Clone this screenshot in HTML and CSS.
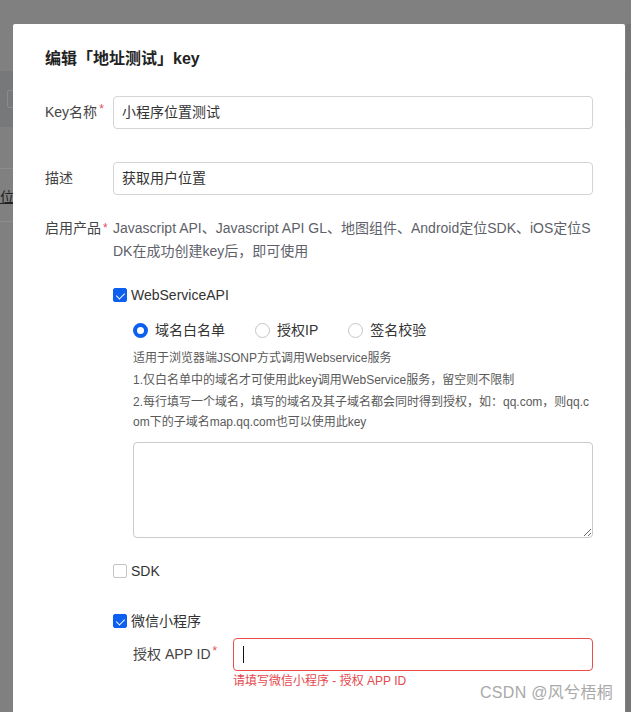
FILE: index.html
```html
<!DOCTYPE html>
<html lang="zh-CN">
<head>
<meta charset="utf-8">
<title>编辑key</title>
<link rel="stylesheet" href="styles.css">
</head>
<body>
<div class="page">
  <div class="page-band"><span class="page-box"></span></div>
  <div class="page-row"><span class="page-link">位</span></div>
  <div class="page-scroll"></div>
</div>

<div class="dialog">
  <h2 class="dialog-title">编辑「地址测试」key</h2>

  <div class="form-item">
    <div class="label">Key名称<span class="req">*</span></div>
    <div class="control"><div class="input">小程序位置测试</div></div>
  </div>

  <div class="form-item item-desc">
    <div class="label">描述</div>
    <div class="control"><div class="input">获取用户位置</div></div>
  </div>

  <div class="form-item item-products">
    <div class="label label-text">启用产品<span class="req">*</span></div>
    <div class="control">
      <p class="products-desc">Javascript API、Javascript API GL、地图组件、Android定位SDK、iOS定位SDK在成功创建key后，即可使用</p>

      <label class="checkbox row-ws"><span class="box checked"></span>WebServiceAPI</label>
      <div class="sub">
        <div class="radios">
          <span class="radio"><span class="dot on"></span>域名白名单</span>
          <span class="radio"><span class="dot"></span>授权IP</span>
          <span class="radio"><span class="dot"></span>签名校验</span>
        </div>
        <div class="help">
          <p>适用于浏览器端JSONP方式调用Webservice服务</p>
          <p>1.仅白名单中的域名才可使用此key调用WebService服务，留空则不限制</p>
          <p>2.每行填写一个域名，填写的域名及其子域名都会同时得到授权，如：qq.com，则qq.com下的子域名map.qq.com也可以使用此key</p>
        </div>
        <textarea class="textarea"></textarea>
      </div>

      <label class="checkbox row-sdk"><span class="box"></span>SDK</label>

      <label class="checkbox row-wx"><span class="box checked"></span>微信小程序</label>
      <div class="sub">
        <div class="appid-row">
          <div class="appid-label">授权 APP ID<span class="req">*</span></div>
          <div class="appid-control">
            <div class="input input-error"><span class="caret"></span></div>
            <div class="error-text">请填写微信小程序 - 授权 APP ID</div>
          </div>
        </div>
      </div>
    </div>
  </div>
</div>

<div class="watermark">CSDN @风兮梧桐</div>
</body>
</html>
```

FILE: styles.css
```css
* { box-sizing: border-box; }

html, body {
  margin: 0;
  padding: 0;
  width: 631px;
  height: 712px;
  overflow: hidden;
}

body {
  background: #808080;
  font-family: "Liberation Sans", "Noto Sans CJK SC", sans-serif;
  font-size: 14px;
  color: #333;
  position: relative;
}

/* underlying page seen through the mask */
.page {
  position: absolute;
  inset: 0;
}
.page-band {
  position: absolute;
  left: 0;
  top: 71px;
  width: 631px;
  height: 56px;
  background: #777879;
}
.page-box {
  position: absolute;
  left: 7px;
  top: 19px;
  width: 40px;
  height: 18px;
  border: 1px solid #8a8a8a;
  border-radius: 2px;
}
.page-row {
  position: absolute;
  left: 0;
  top: 168px;
  width: 631px;
  height: 54px;
  border-top: 1px solid #8c8c8c;
  border-bottom: 1px solid #8c8c8c;
}
.page-link {
  position: absolute;
  left: 0;
  top: 17px;
  font-size: 14px;
  color: #222;
  text-decoration: underline;
  font-family: "Noto Sans CJK SC", sans-serif;
}
.page-scroll {
  position: absolute;
  right: 0;
  top: 24px;
  width: 5px;
  bottom: 0;
  background: #767676;
}

/* dialog */
.dialog {
  position: absolute;
  left: 13px;
  top: 24px;
  width: 612px;
  height: 720px;
  background: #fff;
  padding: 23px 32px 0 32px;
  border-radius: 2px 2px 0 0;
}

.dialog-title {
  margin: 0;
  font-size: 16px;
  line-height: 24px;
  font-weight: bold;
  color: #222;
  font-family: "Liberation Sans", "Noto Sans CJK SC", sans-serif;
}

.form-item {
  display: flex;
  margin-top: 25px;
}
.item-desc { margin-top: 33px; }
.item-products { margin-top: 22px; }

.label {
  width: 68px;
  flex: none;
  line-height: 33px;
  color: #444;
  white-space: nowrap;
}
.label-text { line-height: 23px; }

.req {
  color: #e34d59;
  font-size: 12px;
  vertical-align: top;
  position: relative;
  top: -3px;
  margin-left: 2px;
}
.label-text .req { top: 0; }

.control {
  flex: 1;
  min-width: 0;
}

.input {
  height: 33px;
  border: 1px solid #d4d4d4;
  border-radius: 4px;
  padding: 0 8px;
  line-height: 31px;
  color: #333;
  background: #fff;
}

.products-desc {
  margin: 0;
  line-height: 23px;
  color: #5e6169;
  word-break: break-all;
}

.checkbox {
  display: flex;
  align-items: center;
  line-height: 22px;
  color: #333;
}
.row-ws { margin-top: 21px; }
.row-sdk { margin-top: 22px; }
.row-wx { margin-top: 28px; }

.box {
  width: 14px;
  height: 14px;
  border: 1px solid #c5c5c5;
  border-radius: 2px;
  margin-right: 4px;
  position: relative;
  background: #fff;
  flex: none;
}
.box.checked {
  background: #0d5ff0;
  border-color: #0d5ff0;
}
.box.checked::after {
  content: "";
  position: absolute;
  left: 3.5px;
  top: 1.5px;
  width: 4px;
  height: 7px;
  border-right: 1.5px solid #fff;
  border-bottom: 1.5px solid #fff;
  transform: rotate(45deg);
}

.sub {
  padding-left: 20px;
}

.radios {
  display: flex;
  margin-top: 13px;
  line-height: 22px;
}
.radio {
  display: flex;
  align-items: center;
  margin-right: 30px;
  color: #333;
}
.dot {
  width: 15px;
  height: 15px;
  border: 1px solid #c5c5c5;
  border-radius: 50%;
  margin-right: 7px;
  background: #fff;
}
.dot.on {
  border: 4.5px solid #0d5ff0;
}

.help {
  margin-top: 7px;
  font-size: 12px;
  color: #5a5a5a;
}
.help p {
  margin: 0 0 2px;
  line-height: 20px;
  word-break: break-all;
}

.textarea {
  display: block;
  margin-top: 10px;
  width: 100%;
  height: 96px;
  border: 1px solid #c9c9ce;
  border-radius: 4px;
  resize: vertical;
  font-family: inherit;
  outline: none;
}

.appid-row {
  display: flex;
  margin-top: 6px;
}
.appid-label {
  width: 100px;
  flex: none;
  line-height: 33px;
  color: #444;
}
.appid-control { flex: 1; }

.input-error {
  border-color: #ea4d4d;
  display: flex;
  align-items: center;
  padding-left: 9px;
}
.caret {
  width: 1px;
  height: 17px;
  background: #111;
}
.error-text {
  margin-top: 2px;
  font-size: 12px;
  line-height: 16px;
  color: #e5484d;
}

.watermark {
  position: absolute;
  left: 480px;
  top: 683px;
  font-size: 16px;
  line-height: 20px;
  color: #a9a9a9;
  font-family: "Liberation Sans", "Noto Sans CJK SC", sans-serif;
  letter-spacing: 0.3px;
}
```
